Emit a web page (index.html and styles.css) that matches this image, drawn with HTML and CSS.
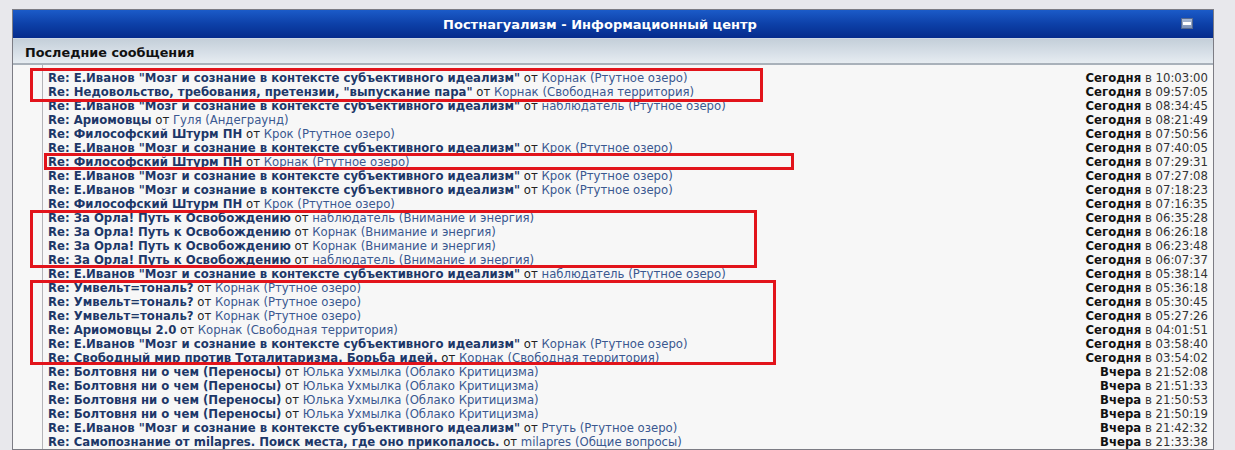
FILE: index.html
```html
<!DOCTYPE html>
<html lang="ru">

<head>
    <meta charset="UTF-8">
    <title>Постнагуализм - Информационный центр</title>
    <link rel="stylesheet" href="styles.css">
</head>

<body>

    <div class="panel">
        <!-- Title bar -->
        <div class="panel-head">
            <span class="panel-title">Постнагуализм - Информационный центр</span>
            <span class="collapse"></span>
        </div>

        <div class="panel-sub">Последние сообщения</div>

        <!-- Latest posts -->
        <div class="panel-body">
            <div class="side"></div>
            <ul class="posts">
                <li><span class="topic"><a href="#">Re: Е.Иванов "Мозг и сознание в контексте субъективного идеализм"</a> от <a href="#" class="user">Корнак</a> <a href="#" class="forum">(Ртутное озеро)</a></span><span class="when"><b>Сегодня</b> в 10:03:00</span></li>
                <li><span class="topic"><a href="#">Re: Недовольство, требования, претензии, "выпускание пара"</a> от <a href="#" class="user">Корнак</a> <a href="#" class="forum">(Свободная территория)</a></span><span class="when"><b>Сегодня</b> в 09:57:05</span></li>
                <li><span class="topic"><a href="#">Re: Е.Иванов "Мозг и сознание в контексте субъективного идеализм"</a> от <a href="#" class="user">наблюдатель</a> <a href="#" class="forum">(Ртутное озеро)</a></span><span class="when"><b>Сегодня</b> в 08:34:45</span></li>
                <li><span class="topic"><a href="#">Re: Ариомовцы</a> от <a href="#" class="user">Гуля</a> <a href="#" class="forum">(Андеграунд)</a></span><span class="when"><b>Сегодня</b> в 08:21:49</span></li>
                <li><span class="topic"><a href="#">Re: Философский Штурм ПН</a> от <a href="#" class="user">Крок</a> <a href="#" class="forum">(Ртутное озеро)</a></span><span class="when"><b>Сегодня</b> в 07:50:56</span></li>
                <li><span class="topic"><a href="#">Re: Е.Иванов "Мозг и сознание в контексте субъективного идеализм"</a> от <a href="#" class="user">Крок</a> <a href="#" class="forum">(Ртутное озеро)</a></span><span class="when"><b>Сегодня</b> в 07:40:05</span></li>
                <li><span class="topic"><a href="#">Re: Философский Штурм ПН</a> от <a href="#" class="user">Корнак</a> <a href="#" class="forum">(Ртутное озеро)</a></span><span class="when"><b>Сегодня</b> в 07:29:31</span></li>
                <li><span class="topic"><a href="#">Re: Е.Иванов "Мозг и сознание в контексте субъективного идеализм"</a> от <a href="#" class="user">Крок</a> <a href="#" class="forum">(Ртутное озеро)</a></span><span class="when"><b>Сегодня</b> в 07:27:08</span></li>
                <li><span class="topic"><a href="#">Re: Е.Иванов "Мозг и сознание в контексте субъективного идеализм"</a> от <a href="#" class="user">Крок</a> <a href="#" class="forum">(Ртутное озеро)</a></span><span class="when"><b>Сегодня</b> в 07:18:23</span></li>
                <li><span class="topic"><a href="#">Re: Философский Штурм ПН</a> от <a href="#" class="user">Крок</a> <a href="#" class="forum">(Ртутное озеро)</a></span><span class="when"><b>Сегодня</b> в 07:16:35</span></li>
                <li><span class="topic"><a href="#">Re: За Орла! Путь к Освобождению</a> от <a href="#" class="user">наблюдатель</a> <a href="#" class="forum">(Внимание и энергия)</a></span><span class="when"><b>Сегодня</b> в 06:35:28</span></li>
                <li><span class="topic"><a href="#">Re: За Орла! Путь к Освобождению</a> от <a href="#" class="user">Корнак</a> <a href="#" class="forum">(Внимание и энергия)</a></span><span class="when"><b>Сегодня</b> в 06:26:18</span></li>
                <li><span class="topic"><a href="#">Re: За Орла! Путь к Освобождению</a> от <a href="#" class="user">Корнак</a> <a href="#" class="forum">(Внимание и энергия)</a></span><span class="when"><b>Сегодня</b> в 06:23:48</span></li>
                <li><span class="topic"><a href="#">Re: За Орла! Путь к Освобождению</a> от <a href="#" class="user">наблюдатель</a> <a href="#" class="forum">(Внимание и энергия)</a></span><span class="when"><b>Сегодня</b> в 06:07:37</span></li>
                <li><span class="topic"><a href="#">Re: Е.Иванов "Мозг и сознание в контексте субъективного идеализм"</a> от <a href="#" class="user">наблюдатель</a> <a href="#" class="forum">(Ртутное озеро)</a></span><span class="when"><b>Сегодня</b> в 05:38:14</span></li>
                <li><span class="topic"><a href="#">Re: Умвельт=тональ?</a> от <a href="#" class="user">Корнак</a> <a href="#" class="forum">(Ртутное озеро)</a></span><span class="when"><b>Сегодня</b> в 05:36:18</span></li>
                <li><span class="topic"><a href="#">Re: Умвельт=тональ?</a> от <a href="#" class="user">Корнак</a> <a href="#" class="forum">(Ртутное озеро)</a></span><span class="when"><b>Сегодня</b> в 05:30:45</span></li>
                <li><span class="topic"><a href="#">Re: Умвельт=тональ?</a> от <a href="#" class="user">Корнак</a> <a href="#" class="forum">(Ртутное озеро)</a></span><span class="when"><b>Сегодня</b> в 05:27:26</span></li>
                <li><span class="topic"><a href="#">Re: Ариомовцы 2.0</a> от <a href="#" class="user">Корнак</a> <a href="#" class="forum">(Свободная территория)</a></span><span class="when"><b>Сегодня</b> в 04:01:51</span></li>
                <li><span class="topic"><a href="#">Re: Е.Иванов "Мозг и сознание в контексте субъективного идеализм"</a> от <a href="#" class="user">Корнак</a> <a href="#" class="forum">(Ртутное озеро)</a></span><span class="when"><b>Сегодня</b> в 03:58:40</span></li>
                <li><span class="topic"><a href="#">Re: Свободный мир против Тоталитаризма. Борьба идей.</a> от <a href="#" class="user">Корнак</a> <a href="#" class="forum">(Свободная территория)</a></span><span class="when"><b>Сегодня</b> в 03:54:02</span></li>
                <li><span class="topic"><a href="#">Re: Болтовня ни о чем (Переносы)</a> от <a href="#" class="user">Юлька Ухмылка</a> <a href="#" class="forum">(Облако Критицизма)</a></span><span class="when"><b>Вчера</b> в 21:52:08</span></li>
                <li><span class="topic"><a href="#">Re: Болтовня ни о чем (Переносы)</a> от <a href="#" class="user">Юлька Ухмылка</a> <a href="#" class="forum">(Облако Критицизма)</a></span><span class="when"><b>Вчера</b> в 21:51:33</span></li>
                <li><span class="topic"><a href="#">Re: Болтовня ни о чем (Переносы)</a> от <a href="#" class="user">Юлька Ухмылка</a> <a href="#" class="forum">(Облако Критицизма)</a></span><span class="when"><b>Вчера</b> в 21:50:53</span></li>
                <li><span class="topic"><a href="#">Re: Болтовня ни о чем (Переносы)</a> от <a href="#" class="user">Юлька Ухмылка</a> <a href="#" class="forum">(Облако Критицизма)</a></span><span class="when"><b>Вчера</b> в 21:50:19</span></li>
                <li><span class="topic"><a href="#">Re: Е.Иванов "Мозг и сознание в контексте субъективного идеализм"</a> от <a href="#" class="user">Ртуть</a> <a href="#" class="forum">(Ртутное озеро)</a></span><span class="when"><b>Вчера</b> в 21:42:32</span></li>
                <li><span class="topic"><a href="#">Re: Самопознание от milapres. Поиск места, где оно прикопалось.</a> от <a href="#" class="user">milapres</a> <a href="#" class="forum">(Общие вопросы)</a></span><span class="when"><b>Вчера</b> в 21:33:38</span></li>
            </ul>
        </div>
    </div>

    <!-- Red highlight marks drawn over the list -->
    <div class="mark mark-1"></div>
    <div class="mark mark-2"></div>
    <div class="mark mark-3"></div>
    <div class="mark mark-4"></div>

</body>

</html>
```

FILE: styles.css
```css
/* Reset */
* {
    margin: 0;
    padding: 0;
    box-sizing: border-box;
}

body {
    font-family: 'DejaVu Sans', Verdana, sans-serif;
    font-size: 11.7px;
    background: #e8e8ec;
    color: #222;
    padding: 9px 21px 0 12px;
    position: relative;
    height: 450px;
    overflow: hidden;
}

a {
    text-decoration: none;
}

/* Panel */
.panel {
    border: 1px solid #7c7c84;
    background: #f7f7f7;
}

.panel-head {
    height: 29px;
    padding: 1px 26px 0 0;
    background: linear-gradient(to bottom, #1b5bc8 0%, #0d40a8 50%, #062b8c 100%);
    border-bottom: 1px solid #cfd8e4;
    display: flex;
    align-items: center;
    justify-content: center;
    position: relative;
}

.panel-title {
    color: #fff;
    font-weight: bold;
    font-size: 13px;
}

.collapse {
    position: absolute;
    right: 20px;
    top: 8px;
    width: 12px;
    height: 11px;
    background: linear-gradient(to bottom, #a9b9d4, #7d92b8);
    border: 1px solid #55698f;
}

.collapse::after {
    content: '';
    position: absolute;
    left: 1px;
    right: 1px;
    top: 3px;
    height: 3px;
    background: #fff;
}

.panel-sub {
    height: 26px;
    padding-top: 2px;
    line-height: 24px;
    padding-left: 12px;
    font-weight: bold;
    font-size: 12.8px;
    color: #111;
    background: linear-gradient(to bottom, #c4cfd9 0%, #d8e0e8 60%, #e6ecf1 100%);
    border-bottom: 2px solid #a9b1ba;
}

.panel-body {
    display: flex;
}

.side {
    width: 30px;
    border-right: 1px solid #b4b4b8;
}

.posts {
    list-style: none;
    flex: 1;
    padding: 6px 5px 0 5px;
}

.posts li {
    display: flex;
    justify-content: space-between;
    height: 14px;
    line-height: 14px;
    white-space: nowrap;
}

.topic a {
    color: #1d3768;
    font-weight: bold;
}

.topic a.user,
.topic a.forum {
    color: #3a5890;
    font-weight: normal;
}

.when {
    color: #333;
}

.when b {
    color: #111;
}

/* Highlight marks */
.mark {
    position: absolute;
    border: 3px solid #e2141b;
}

.mark-1 {
    left: 30px;
    top: 68px;
    width: 733px;
    height: 34px;
}

.mark-2 {
    left: 44px;
    top: 153px;
    width: 750px;
    height: 17px;
}

.mark-3 {
    left: 30px;
    top: 210px;
    width: 727px;
    height: 58px;
}

.mark-4 {
    left: 30px;
    top: 280px;
    width: 746px;
    height: 85px;
}
```
